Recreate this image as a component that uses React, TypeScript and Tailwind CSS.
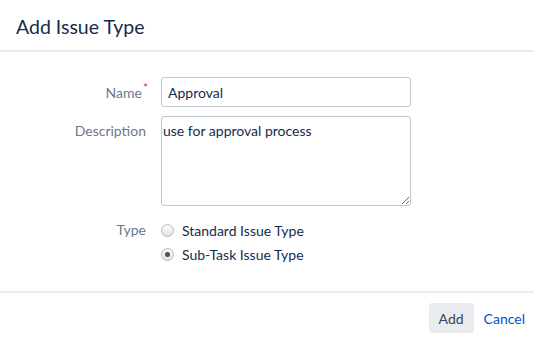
import React, { useState } from "react";

const font = { fontFamily: 'Lato, "Open Sans", Arial, sans-serif' };

const Radio: React.FC<{ checked: boolean; label: string; onClick: () => void }> = ({
  checked,
  label,
  onClick,
}) => (
  <label className="flex items-center h-[20px] cursor-pointer" onClick={onClick}>
    <span className="w-[13px] h-[13px] rounded-full border border-[#b8b8b8] bg-gradient-to-b from-[#fafafa] to-[#e4e4e4] flex items-center justify-center">
      {checked && <span className="w-[5px] h-[5px] rounded-full bg-[#505050]" />}
    </span>
    <span className="ml-[8px] text-[14px] text-[#172b4d]">{label}</span>
  </label>
);

export default function App() {
  const [name, setName] = useState("Approval");
  const [desc, setDesc] = useState("use for approval process");
  const [type, setType] = useState<"standard" | "subtask">("subtask");

  return (
    <div className="w-[534px] h-[341px] bg-white flex flex-col" style={font}>
      {/* header */}
      <div className="h-[52px] px-4 flex items-center border-b-2 border-[#ebecf0] shrink-0">
        <h2 className="text-[19.5px] text-[#172b4d] font-normal pt-[4px]">Add Issue Type</h2>
      </div>

      {/* form body */}
      <div className="flex-1 pt-[25px] flex flex-col gap-[10px]">
        <div className="flex items-center">
          <div className="w-[146px] text-right text-[14px] text-[#6b778c]">
            Name
            <span className="text-[#de350b] text-[12px] align-top relative -top-[3px] -mr-[2px] ml-[1px]">*</span>
          </div>
          <input
            className="ml-[15px] w-[250px] h-[30px] border border-[#c1c7d0] rounded-[3px] px-[6px] text-[14px] text-[#172b4d] outline-none"
            value={name}
            onChange={(e) => setName(e.target.value)}
          />
        </div>

        <div className="flex items-start -mt-[1px]">
          <div className="w-[146px] text-right text-[14px] text-[#6b778c] pt-[5px] leading-[20px]">
            Description
          </div>
          <textarea
            className="ml-[15px] w-[250px] h-[90px] border border-[#c1c7d0] rounded-[3px] px-[1px] pt-[4px] text-[14px] leading-[20px] text-[#172b4d] outline-none resize"
            value={desc}
            onChange={(e) => setDesc(e.target.value)}
          />
        </div>

        <div className="flex items-start mt-[4px]">
          <div className="w-[146px] text-right text-[14px] text-[#6b778c] leading-[20px]">Type</div>
          <div className="ml-[15px] flex flex-col gap-[4px]">
            <Radio
              checked={type === "standard"}
              label="Standard Issue Type"
              onClick={() => setType("standard")}
            />
            <Radio
              checked={type === "subtask"}
              label="Sub-Task Issue Type"
              onClick={() => setType("subtask")}
            />
          </div>
        </div>
      </div>

      {/* footer */}
      <div className="h-[50px] border-t-2 border-[#ebecf0] flex items-start justify-end pt-[10px] pr-[9px] shrink-0">
        <button className="h-[30px] px-[10px] rounded-[3px] bg-[#ebecf0] text-[14px] text-[#344563]">
          Add
        </button>
        <button className="h-[30px] ml-[10px] text-[14px] text-[#0052cc]">Cancel</button>
      </div>
    </div>
  );
}
